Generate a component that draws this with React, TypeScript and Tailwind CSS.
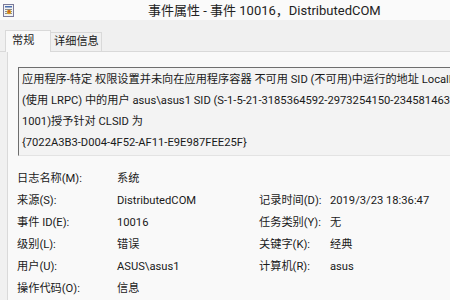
import React from "react";

const font = { fontFamily: 'Roboto, "Noto Sans CJK SC", sans-serif' };

function Row({ label, value, w = "w-[100px]" }: { label: string; value: string; w?: string }) {
  return (
    <div className="flex h-[22px] items-center">
      <div className={`${w} shrink-0 whitespace-nowrap`}>{label}</div>
      <div className="whitespace-nowrap">{value}</div>
    </div>
  );
}

export default function App() {
  return (
    <div
      className="relative h-[300px] w-[450px] overflow-hidden bg-[#f0f0f0] text-[11.2px] text-[#1a1a1a]"
      style={font}
    >
      {/* title bar */}
      <div className="flex h-[20px] items-center bg-[#fafafa] pl-[3px]">
        <svg width="11" height="13" viewBox="0 0 11 13" className="shrink-0">
          <rect x="0.5" y="0.5" width="10" height="12" fill="#f3f3f3" stroke="#7a7a9a" />
          <rect x="2" y="2" width="7" height="1.5" fill="#4a6fb0" />
          <rect x="2" y="5" width="7" height="1" fill="#8a8a8a" />
          <rect x="2" y="7" width="7" height="1" fill="#8a8a8a" />
          <rect x="2" y="9" width="7" height="1" fill="#8a8a8a" />
          <circle cx="6" cy="8" r="2.2" fill="#d8a020" />
          <rect x="5.4" y="6.4" width="1.2" height="2.2" fill="#c03030" />
        </svg>
        <div className="ml-[134px] whitespace-nowrap text-[13px] leading-none text-[#222]">
          事件属性 - 事件 10016，DistributedCOM
        </div>
      </div>

      {/* tabs */}
      <div className="mt-[10px] flex h-[22px] items-end border-b border-[#d9d9d9] pl-[5px]">
        <div className="relative z-10 -mb-px flex h-[22px] w-[46px] items-center whitespace-nowrap border border-b-0 border-[#d9d9d9] bg-[#f9f9f9] pl-[6px]">
          常规
        </div>
        <div className="flex h-[19px] w-[51px] items-center whitespace-nowrap border border-b-0 border-l-0 border-[#d9d9d9] bg-[#f0f0f0] pl-[3px]">
          详细信息
        </div>
      </div>

      {/* panel */}
      <div className="ml-[7px] h-[260px] border-l border-[#d9d9d9] bg-[#f9f9f9] pt-[15px]">
        <div className="ml-[10px] h-[89px] overflow-hidden border-l border-t border-b border-[#6e6e6e] border-b-[#e3e3e3] bg-[#f3f3f3] pl-[3px] pt-[1px]">
          <div className="h-[21px] whitespace-nowrap leading-[21px]">
            应用程序-特定 权限设置并未向在应用程序容器 不可用 SID (不可用)中运行的地址 LocalHost
          </div>
          <div className="h-[21px] whitespace-nowrap leading-[21px]">
            (使用 LRPC) 中的用户 asus\asus1 SID (S-1-5-21-3185364592-2973254150-2345814632-
          </div>
          <div className="h-[21px] whitespace-nowrap leading-[21px]">1001)授予针对 CLSID 为</div>
          <div className="h-[21px] whitespace-nowrap leading-[21px]">
            {"{7022A3B3-D004-4F52-AF11-E9E987FEE25F}"}
          </div>
        </div>

        <div className="ml-[9px] mt-[12px] flex">
          <div className="w-[242px] shrink-0">
            <Row label="日志名称(M):" value="系统" />
            <Row label="来源(S):" value="DistributedCOM" />
            <Row label="事件 ID(E):" value="10016" />
            <Row label="级别(L):" value="错误" />
            <Row label="用户(U):" value="ASUS\asus1" />
            <Row label="操作代码(O):" value="信息" />
          </div>
          <div>
            <div className="h-[22px]" />
            <Row label="记录时间(D):" value="2019/3/23 18:36:47" w="w-[71px]" />
            <Row label="任务类别(Y):" value="无" w="w-[71px]" />
            <Row label="关键字(K):" value="经典" w="w-[71px]" />
            <Row label="计算机(R):" value="asus" w="w-[71px]" />
          </div>
        </div>
      </div>
    </div>
  );
}
